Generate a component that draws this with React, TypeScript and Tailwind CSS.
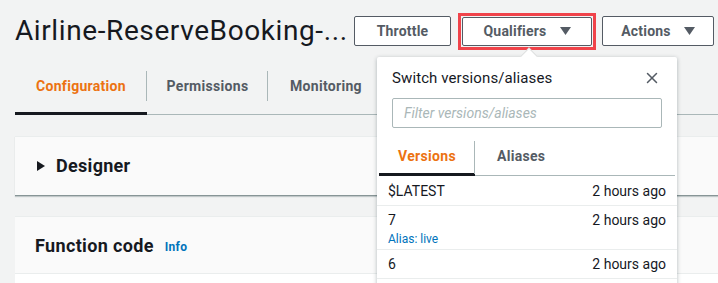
import { X } from "lucide-react"

const Caret = () => (
  <svg width="11" height="8" viewBox="0 0 11 8" className="ml-[13px]">
    <path d="M0 0 H11 L5.5 8 Z" fill="#545b64" />
  </svg>
)

const Header = () => (
  <div className="flex items-center h-[62px] pl-[15px]">
    <h1 className="w-[332px] text-[28px] leading-none text-[#16191f] tracking-[0.6px] whitespace-nowrap">
      Airline-ReserveBooking-...
    </h1>
    <div className="flex items-center ml-[7px]">
      <button className="h-[30px] w-[97px] bg-white border border-[#545b64] rounded-[2px] text-[14px] font-bold tracking-[0.2px] text-[#545b64]">
        Throttle
      </button>
      <div className="ml-[7px] border-[3px] border-[#f0434a] p-[1px]">
        <button className="h-[29px] w-[130px] flex items-center justify-center bg-white border border-[#545b64] rounded-[2px] text-[14px] font-bold tracking-[0.2px] text-[#545b64]">
          Qualifiers
          <Caret />
        </button>
      </div>
      <button className="ml-[6px] h-[30px] w-[112px] flex items-center justify-center bg-white border border-[#545b64] rounded-[2px] text-[14px] font-bold tracking-[0.2px] text-[#545b64]">
        Actions
        <Caret />
      </button>
    </div>
  </div>
)

const Tabs = () => (
  <div className="ml-[15px] mt-[9px] border-b border-[#aab7b8] flex h-[44px]">
    <div className="w-[132px] border-b-[3px] border-[#16191f] -mb-[1px] relative">
      <div className="h-[30px] flex items-center justify-center">
        <span className="text-[14px] font-bold tracking-[0.3px] text-[#ec7211]">Configuration</span>
      </div>
      <span className="absolute right-0 top-0 h-[30px] w-px bg-[#aab7b8]" />
    </div>
    <div className="w-[121px] relative">
      <div className="h-[30px] flex items-center justify-center">
        <span className="text-[14px] font-bold tracking-[0.3px] text-[#545b64]">Permissions</span>
      </div>
      <span className="absolute right-0 top-0 h-[30px] w-px bg-[#aab7b8]" />
    </div>
    <div className="pl-[22px] h-[30px] flex items-center">
      <span className="text-[14px] font-bold tracking-[0.3px] text-[#545b64]">Monitoring</span>
    </div>
  </div>
)

const Cards = () => (
  <div className="ml-[15px] mt-[21px] flex flex-col gap-[20px]">
    <div className="h-[60px] bg-[#fafafa] border-t border-[#eaeded] border-b border-b-[#879596] shadow-[0_1px_1px_rgba(0,28,36,0.2)] flex items-center pl-[22px]">
      <svg width="8" height="10" viewBox="0 0 8 10">
        <path d="M0 0 L8 5 L0 10 Z" fill="#16191f" />
      </svg>
      <span className="ml-[11px] text-[18px] font-bold tracking-[0.3px] text-[#16191f] -mt-[1px]">Designer</span>
    </div>
    <div className="bg-[#fafafa] border-t border-[#eaeded]">
      <div className="h-[57px] flex items-center pl-[20px] border-b border-[#eaeded]">
        <span className="text-[18px] font-bold tracking-[0.35px] text-[#16191f]">Function code</span>
        <span className="ml-[11px] mt-[3px] text-[12px] font-bold tracking-[0.3px] text-[#0073bb]">Info</span>
      </div>
      <div className="h-[20px] bg-white" />
    </div>
  </div>
)

const rows = [
  { name: "$LATEST", time: "2 hours ago", cls: "pt-[7px] pb-[5px]" },
  { name: "7", time: "2 hours ago", alias: "Alias: live", cls: "pt-[6px] pb-[2px]" },
  { name: "6", time: "2 hours ago", cls: "pt-[6px] pb-[5px]" },
]

const Popover = () => (
  <div className="absolute left-[377px] top-[57px] w-[300px] bg-white shadow-[0_1px_4px_rgba(0,28,36,0.3)] rounded-[2px]">
    <div className="absolute -top-[7px] left-[146px] w-[12px] h-[12px] bg-white rotate-45 border-l border-t border-[#dcdede]" />
    <div className="relative px-[15px] pt-[10px]">
      <div className="flex items-center justify-between h-[22px]">
        <span className="text-[15px] text-[#16191f] tracking-[0.1px]">Switch versions/aliases</span>
        <X size={18} strokeWidth={2} className="text-[#545b64] mr-[1px]" />
      </div>
      <div className="mt-[9px] h-[30px] border border-[#aab7b8] rounded-[2px] flex items-center px-[11px]">
        <span className="text-[14px] italic text-[#aab7b8]">Filter versions/aliases</span>
      </div>
    </div>
    <div className="mt-[13px] mx-[2px] flex h-[35px] border-b border-[#aab7b8]">
      <div className="w-[96px] border-b-[3px] border-[#16191f] -mb-[1px] relative">
        <div className="h-[30px] flex items-center justify-center">
          <span className="text-[14px] font-bold tracking-[0.3px] text-[#ec7211]">Versions</span>
        </div>
        <span className="absolute right-0 top-0 h-[33px] w-px bg-[#aab7b8]" />
      </div>
      <div className="pl-[22px] h-[30px] flex items-center">
        <span className="text-[14px] font-bold tracking-[0.3px] text-[#545b64]">Aliases</span>
      </div>
    </div>
    <div className="flex flex-col">
      {rows.map((r) => (
        <div key={r.name} className={`px-[11px] border-b border-[#eaeded] ${r.cls}`}>
          <div className="flex justify-between text-[14px] text-[#16191f] leading-[17px]">
            <span>{r.name}</span>
            <span>{r.time}</span>
          </div>
          {r.alias && <div className="text-[12px] text-[#0073bb] mt-[2px] leading-[16px]">{r.alias}</div>}
        </div>
      ))}
      <div className="h-[12px]" />
    </div>
  </div>
)

export default function App() {
  return (
    <div
      className="relative w-[718px] h-[283px] overflow-hidden bg-[#f2f3f3]"
      style={{ fontFamily: "Roboto, 'Open Sans', sans-serif" }}
    >
      <Header />
      <Tabs />
      <Cards />
      <Popover />
    </div>
  )
}
